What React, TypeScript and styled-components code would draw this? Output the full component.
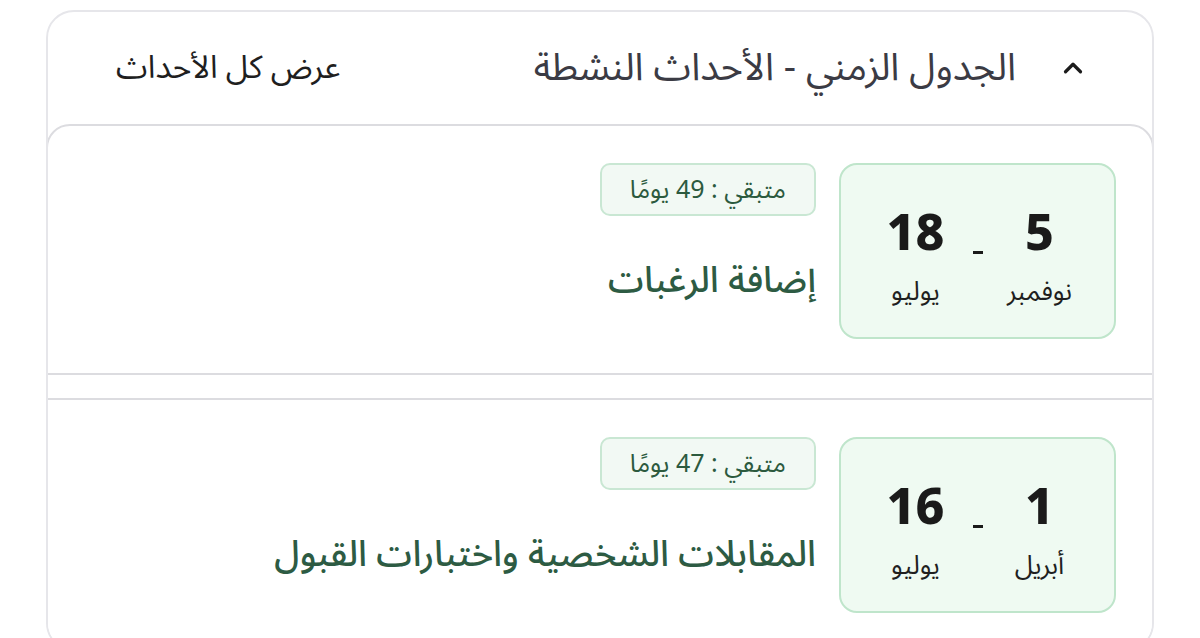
import React from 'react';
import styled, { createGlobalStyle } from 'styled-components';

const GlobalStyle = createGlobalStyle`
  html, body {
    margin: 0;
    padding: 0;
    background: #ffffff;
  }
  body {
    font-family: 'Noto Sans Arabic', 'Noto Sans', 'DejaVu Sans', sans-serif;
  }
`;

const Page = styled.div`
  width: 1200px;
  height: 638px;
  overflow: hidden;
  padding: 10px 46px 0 46px;
  box-sizing: border-box;
  direction: rtl;
`;

const Panel = styled.section`
  border: 2px solid #e6e6ea;
  border-radius: 28px;
  background: #ffffff;
  overflow: hidden;
`;

const Header = styled.header`
  display: flex;
  align-items: center;
  justify-content: space-between;
  height: 112px;
  padding: 0 64px 0 68px;
`;

const HeaderTitle = styled.div`
  display: flex;
  align-items: center;
  gap: 42px;
`;

const Chevron = styled.svg`
  width: 30px;
  height: 30px;
  color: #1c1c1c;
`;

const TitleText = styled.h2`
  margin: 0;
  font-size: 38px;
  font-weight: 400;
  color: #3b3b44;
`;

const ViewAll = styled.a`
  font-size: 32px;
  color: #1f1f1f;
  text-decoration: none;
`;

const EventList = styled.div`
  display: flex;
  flex-direction: column;
  gap: 23px;
`;

const EventCard = styled.article<{ $first?: boolean }>`
  display: flex;
  align-items: flex-start;
  gap: 23px;
  padding: 37px 36px 34px;
  border: 2px solid #dcdce0;
  border-left-width: 0;
  border-right-width: 0;
  border-radius: ${p => (p.$first ? '24px 24px 0 0' : '0')};
  ${p => p.$first && 'border-left-width: 2px; border-right-width: 2px; margin: 0 -2px;'}
  background: #ffffff;
`;

const DateBox = styled.div`
  display: flex;
  align-items: flex-start;
  justify-content: center;
  gap: 17px;
  width: 277px;
  height: 176px;
  box-sizing: border-box;
  padding-top: 41px;
  background: #effaf2;
  border: 2px solid #bfe5cb;
  border-radius: 18px;
`;

const DatePart = styled.div`
  display: flex;
  flex-direction: column;
  align-items: center;
  width: 80px;
`;

const DayNumber = styled.div`
  font-family: 'Noto Sans', 'DejaVu Sans', sans-serif;
  font-size: 50px;
  font-weight: 800;
  line-height: 50px;
  height: 50px;
  color: #1a1a1a;
`;

const MonthName = styled.div`
  margin-top: 18px;
  font-size: 26px;
  line-height: 36px;
  color: #1f1f1f;
  white-space: nowrap;
`;

const Dash = styled.div`
  width: 10px;
  height: 3px;
  margin-top: 45px;
  background: #1a1a1a;
`;

const Details = styled.div`
  display: flex;
  flex-direction: column;
  align-items: flex-start;
  gap: 40px;
`;

const Remaining = styled.div`
  display: flex;
  align-items: center;
  height: 53px;
  box-sizing: border-box;
  padding: 0 28px;
  font-size: 25px;
  color: #2c5a3e;
  background: #f2f9f4;
  border: 2px solid #c9e7d3;
  border-radius: 10px;
`;

const EventTitle = styled.h3`
  margin: 0;
  font-size: 36px;
  line-height: 50px;
  font-weight: 500;
  color: #2d5b43;
`;

interface TimelineEvent {
  id: string;
  startDay: string;
  startMonth: string;
  endDay: string;
  endMonth: string;
  remaining: string;
  title: string;
}

const events: TimelineEvent[] = [
  {
    id: 'wishes',
    startDay: '5',
    startMonth: 'نوفمبر',
    endDay: '18',
    endMonth: 'يوليو',
    remaining: 'متبقي : 49 يومًا',
    title: 'إضافة الرغبات',
  },
  {
    id: 'interviews',
    startDay: '1',
    startMonth: 'أبريل',
    endDay: '16',
    endMonth: 'يوليو',
    remaining: 'متبقي : 47 يومًا',
    title: 'المقابلات الشخصية واختبارات القبول',
  },
];

export default function App() {
  return (
    <Page>
      <GlobalStyle />
      <Panel>
        <Header>
          <HeaderTitle>
            <Chevron viewBox="0 0 24 24" fill="none" stroke="currentColor" strokeWidth={2.6} strokeLinecap="round" strokeLinejoin="round">
              <polyline points="6 15 12 9 18 15" />
            </Chevron>
            <TitleText>الجدول الزمني - الأحداث النشطة</TitleText>
          </HeaderTitle>
          <ViewAll href="#">عرض كل الأحداث</ViewAll>
        </Header>
        <EventList>
          {events.map((ev, i) => (
            <EventCard key={ev.id} $first={i === 0}>
              <DateBox>
                <DatePart>
                  <DayNumber>{ev.startDay}</DayNumber>
                  <MonthName>{ev.startMonth}</MonthName>
                </DatePart>
                <Dash />
                <DatePart>
                  <DayNumber>{ev.endDay}</DayNumber>
                  <MonthName>{ev.endMonth}</MonthName>
                </DatePart>
              </DateBox>
              <Details>
                <Remaining>{ev.remaining}</Remaining>
                <EventTitle>{ev.title}</EventTitle>
              </Details>
            </EventCard>
          ))}
        </EventList>
      </Panel>
    </Page>
  );
}
